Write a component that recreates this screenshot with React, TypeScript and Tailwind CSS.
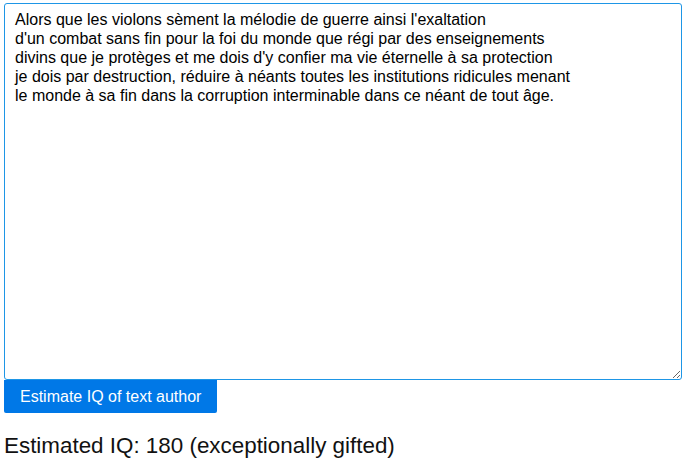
import { useEffect, useRef, useState } from 'react'

const initialText = `Alors que les violons sèment la mélodie de guerre ainsi l'exaltation
d'un combat sans fin pour la foi du monde que régi par des enseignements
divins que je protèges et me dois d'y confier ma vie éternelle à sa protection
je dois par destruction, réduire à néants toutes les institutions ridicules menant
le monde à sa fin dans la corruption interminable dans ce néant de tout âge.`

export default function App() {
  const [text, setText] = useState(initialText)
  const ref = useRef<HTMLTextAreaElement>(null)

  useEffect(() => {
    const el = ref.current
    if (!el) return
    const pos = initialText.indexOf('pour') + 2
    el.focus()
    el.setSelectionRange(pos, pos)
  }, [])

  return (
    <div className="p-1 pt-[3px] font-['Liberation_Sans',Arial,sans-serif] text-black">
      <textarea
        ref={ref}
        value={text}
        onChange={e => setText(e.target.value)}
        spellCheck={false}
        className="block w-[678px] h-[377px] border border-[#1e96e6] rounded-[3px] px-[10px] pt-[6px] pb-2 text-[16px] leading-[19px] outline-none resize-y bg-white font-['Liberation_Sans',Arial,sans-serif]"
      />
      <button className="block h-[33px] px-4 bg-[#0078e7] text-white text-[16px] rounded-b-[2px]">
        Estimate IQ of text author
      </button>
      <p className="mt-[20px] text-[22.4px] leading-[26px] text-[#111]">Estimated IQ: 180 (exceptionally gifted)</p>
    </div>
  )
}
